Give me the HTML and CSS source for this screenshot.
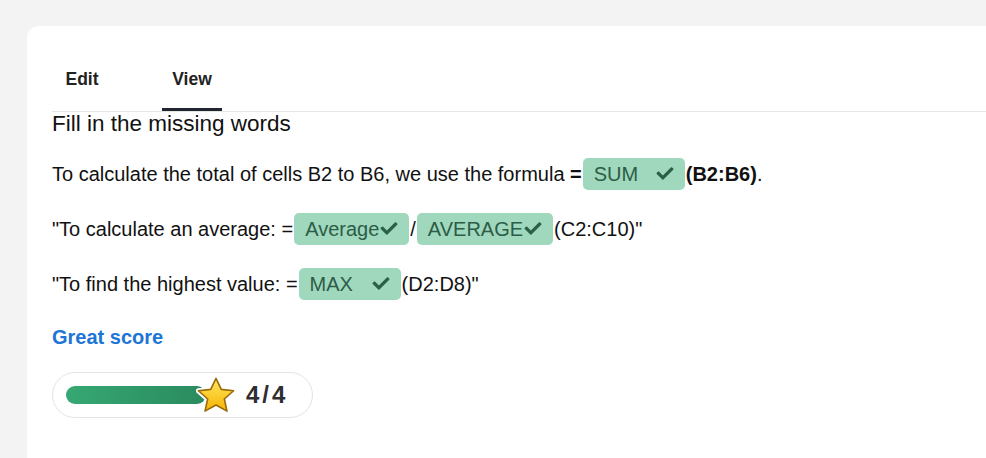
FILE: index.html
```html
<!DOCTYPE html>
<html>
<head>
<meta charset="utf-8">
<link rel="stylesheet" href="styles.css">
</head>
<body>
<div class="card">
  <div class="tabs">
    <div class="tab">Edit</div>
    <div class="tab active">View</div>
  </div>
  <h2 class="title">Fill in the missing words</h2>
  <div class="lines">
    <p class="line">To calculate the total of cells B2 to B6, we use the formula <b>=</b><span class="pill"><span>SUM</span><svg class="check" viewBox="0 0 512 512"><path d="M173.9 439.4l-166.4-166.4c-10-10-10-26.2 0-36.2l36.2-36.2c10-10 26.2-10 36.2 0L192 312.7 432.1 72.6c10-10 26.2-10 36.2 0l36.2 36.2c10 10 10 26.2 0 36.2l-294.4 294.4c-10 10-26.2 10-36.2 0z"/></svg></span><b>(B2:B6)</b>.</p>
    <p class="line">"To calculate an average: =<span class="pill"><span>Average</span><svg class="check" viewBox="0 0 512 512"><path d="M173.9 439.4l-166.4-166.4c-10-10-10-26.2 0-36.2l36.2-36.2c10-10 26.2-10 36.2 0L192 312.7 432.1 72.6c10-10 26.2-10 36.2 0l36.2 36.2c10 10 10 26.2 0 36.2l-294.4 294.4c-10 10-26.2 10-36.2 0z"/></svg></span>/<span class="pill"><span>AVERAGE</span><svg class="check" viewBox="0 0 512 512"><path d="M173.9 439.4l-166.4-166.4c-10-10-10-26.2 0-36.2l36.2-36.2c10-10 26.2-10 36.2 0L192 312.7 432.1 72.6c10-10 26.2-10 36.2 0l36.2 36.2c10 10 10 26.2 0 36.2l-294.4 294.4c-10 10-26.2 10-36.2 0z"/></svg></span>(C2:C10)"</p>
    <p class="line">"To find the highest value: =<span class="pill"><span>MAX</span><svg class="check" viewBox="0 0 512 512"><path d="M173.9 439.4l-166.4-166.4c-10-10-10-26.2 0-36.2l36.2-36.2c10-10 26.2-10 36.2 0L192 312.7 432.1 72.6c10-10 26.2-10 36.2 0l36.2 36.2c10 10 10 26.2 0 36.2l-294.4 294.4c-10 10-26.2 10-36.2 0z"/></svg></span>(D2:D8)"</p>
  </div>
  <div class="result">Great score</div>
  <div class="score">
    <div class="bar"><div class="fill"></div></div>
    <svg class="star" viewBox="2.5 2 35 33">
      <defs>
        <linearGradient id="sg" x1="0" y1="0" x2="0" y2="1">
          <stop offset="0" stop-color="#ffe760"/>
          <stop offset="1" stop-color="#f6b400"/>
        </linearGradient>
      </defs>
      <path d="M20 4 L24.6 13.6 L35.4 14.8 L27.3 22 L29.6 32.6 L20 27.2 L10.4 32.6 L12.7 22 L4.6 14.8 L15.4 13.6 Z" fill="#fff" stroke="#fff" stroke-width="4.5" stroke-linejoin="round"/>
      <path d="M20 4 L24.6 13.6 L35.4 14.8 L27.3 22 L29.6 32.6 L20 27.2 L10.4 32.6 L12.7 22 L4.6 14.8 L15.4 13.6 Z" fill="url(#sg)" stroke="#9a6a08" stroke-width="1.4" stroke-linejoin="round"/>
    </svg>
    <div class="count">4/4</div>
  </div>
</div>
</body>
</html>
```
FILE: styles.css
```css
html, body {
  margin: 0;
  padding: 0;
  background: #f3f3f3;
  overflow: hidden;
  height: 100%;
}
body {
  font-family: "Liberation Sans", Arial, sans-serif;
  color: #111;
}
.card {
  margin: 26px -40px 0 27px;
  background: #fff;
  border-radius: 12px 12px 0 0;
  padding: 25px 0 0 25px;
  height: 600px;
}
.tabs {
  display: flex;
  gap: 50px;
  border-bottom: 1px solid #e6e6e6;
  height: 60px;
}
.tab {
  box-sizing: border-box;
  min-width: 60px;
  padding: 0 10px;
  height: 60px;
  display: flex;
  align-items: center;
  justify-content: center;
  font-weight: bold;
  font-size: 17.5px;
  color: #222;
  border-bottom: 3px solid transparent;
}
.tab.active {
  border-bottom-color: #1f2630;
}
.title {
  margin: 0;
  font-weight: normal;
  font-size: 22.5px;
  line-height: 24px;
  color: #111;
}
.lines {
  display: flex;
  flex-direction: column;
  gap: 21px;
  margin-top: 21px;
}
.line {
  margin: 0;
  font-size: 20px;
  line-height: 34px;
  height: 34px;
}
.line b {
  font-weight: bold;
}
.pill {
  box-sizing: border-box;
  display: inline-flex;
  align-items: center;
  justify-content: space-between;
  vertical-align: middle;
  min-width: 102px;
  height: 32px;
  margin: 0 1px;
  padding: 0 10px 0 11px;
  background: #9fd8bc;
  color: #2d5c48;
  border-radius: 5px;
  font-size: 20px;
  line-height: 32px;
  position: relative;
  top: -2px;
}
.check {
  width: 20px;
  height: 17px;
  fill: #2c6046;
}
.result {
  margin-top: 24px;
  font-size: 20px;
  font-weight: bold;
  color: #1d75d6;
  line-height: 24px;
}
.score {
  margin-top: 23px;
  box-sizing: border-box;
  display: flex;
  width: fit-content;
  align-items: center;
  height: 46px;
  padding: 0 24px 0 13px;
  border: 1px solid #e4e4e4;
  border-radius: 23px;
}
.bar {
  width: 140px;
  height: 18px;
  border-radius: 9px;
  overflow: hidden;
}
.fill {
  width: 100%;
  height: 100%;
  background: linear-gradient(90deg, #36a872, #2a8a5f);
}
.star {
  width: 40px;
  height: 38px;
  margin-left: -10px;
  position: relative;
}
.count {
  margin-left: 10px;
  font-size: 24px;
  font-weight: bold;
  color: #2f2f33;
  letter-spacing: 3px;
}
```
